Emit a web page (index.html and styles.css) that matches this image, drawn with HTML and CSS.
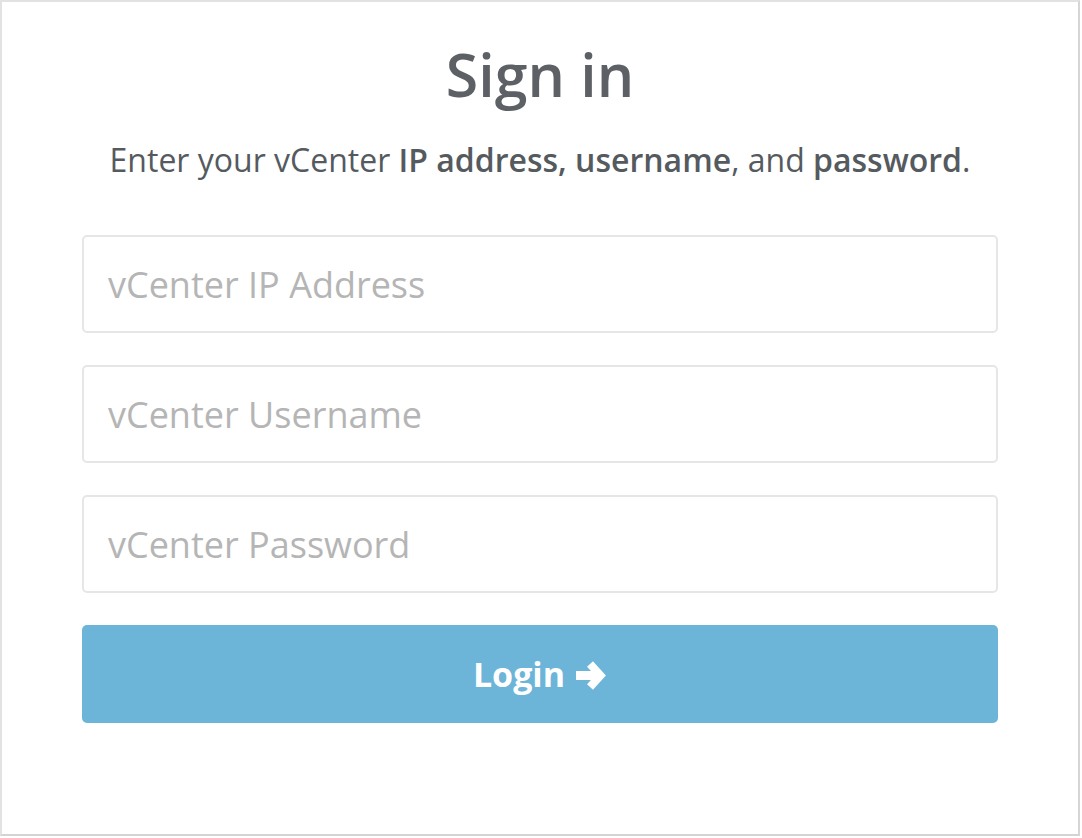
FILE: index.html
```html
<!DOCTYPE html>
<html lang="en">
<head>
    <meta charset="UTF-8">
    <meta name="viewport" content="width=device-width, initial-scale=1.0">
    <title>Sign in</title>
    <link rel="stylesheet" href="styles.css">
</head>
<body>
    <div class="login-card">
        <h1 class="title">Sign in</h1>
        <p class="subtitle">Enter your vCenter <strong>IP address, username</strong>, and <strong>password</strong>.</p>
        <form class="login-form" onsubmit="return false;">
            <input type="text" class="field" placeholder="vCenter IP Address">
            <input type="text" class="field" placeholder="vCenter Username">
            <input type="password" class="field" placeholder="vCenter Password">
            <button type="submit" class="login-btn">
                Login
                <svg class="arrow" viewBox="0 0 32 33" width="32" height="33" aria-hidden="true">
                    <path d="M1 16.5H24" stroke="currentColor" stroke-width="9" fill="none"/>
                    <path d="M15 5L25.5 16.5L15 28" stroke="currentColor" stroke-width="8" stroke-linejoin="miter" fill="none"/>
                </svg>
            </button>
        </form>
    </div>
</body>
</html>
```

FILE: styles.css
```css
body {
    margin: 0;
    font-family: 'Open Sans', 'Noto Sans', sans-serif;
    background-color: #fff;
}

.login-card {
    box-sizing: border-box;
    width: 1080px;
    height: 836px;
    border: 2px solid #e2e2e2;
    border-right-color: #d6d6d6;
    border-bottom-color: #d4d4d4;
    background-color: #fff;
    padding: 40px 80px 0;
}

.title {
    margin: 0;
    font-size: 59px;
    line-height: 64px;
    font-weight: 600;
    color: #5d6166;
    text-align: center;
}

.subtitle {
    margin: 34px 0 0;
    font-size: 32px;
    line-height: 40px;
    color: #555a5f;
    text-align: center;
}

.subtitle strong {
    font-weight: 600;
}

.login-form {
    margin-top: 55px;
    display: flex;
    flex-direction: column;
    gap: 32px;
}

.field {
    box-sizing: border-box;
    height: 98px;
    width: 100%;
    padding: 0 24px;
    border: 2px solid #e6e6e6;
    border-radius: 5px;
    font-family: inherit;
    font-size: 36px;
    color: #555;
    outline: none;
}

.field::placeholder {
    color: #b5b5b5;
}

.login-btn {
    height: 98px;
    border: none;
    border-radius: 5px;
    background-color: #6cb4d8;
    color: #fff;
    font-family: inherit;
    font-size: 34px;
    font-weight: 700;
    display: flex;
    justify-content: center;
    align-items: center;
    gap: 10px;
    cursor: pointer;
}

.arrow {
    margin-top: 2px;
}
```
